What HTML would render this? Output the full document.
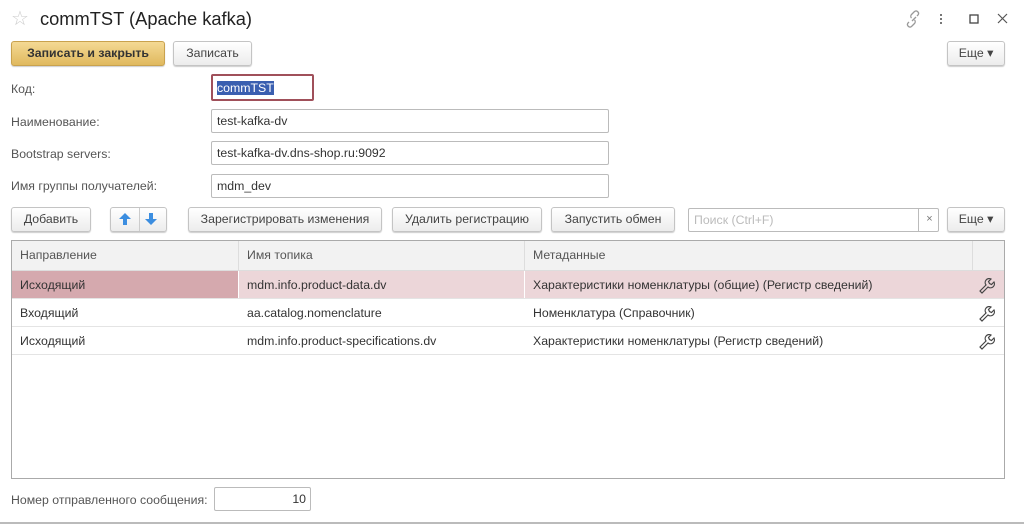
<!DOCTYPE html><html><head><meta charset="utf-8"><style>
body{margin:0;width:1024px;height:525px;background:#fff;font-family:"Liberation Sans",sans-serif;font-size:12.3px;color:#333;position:relative;overflow:hidden}
.a{position:absolute}
.btn{position:absolute;border:1px solid #c4c4c4;border-radius:3px;background:linear-gradient(#fff,#ececec);box-shadow:0 1px 1px rgba(0,0,0,.2);text-align:center;line-height:23px;color:#444;box-sizing:border-box;height:25px}
.inp{position:absolute;border:1px solid #bbb;border-radius:2px;box-sizing:border-box;height:24px;line-height:22px;padding-left:5px;color:#333;background:#fff}
.lbl{position:absolute;color:#555}
.cell{position:absolute;line-height:28px;padding-left:8px;box-sizing:border-box}
.wr{position:absolute;left:978px}
</style></head><body>
<div class="a" style="left:11px;top:6px;font-size:20px;color:#ccc">☆</div>
<div class="a" style="left:40px;top:8px;font-size:18.3px;color:#222">commTST (Apache kafka)</div>
<svg class="a" style="left:905px;top:10px" width="110" height="18" viewBox="0 0 110 18">
<g fill="none" stroke="#999" stroke-width="1.3"><path d="M4 12l-1 1a2.5 2.5 0 0 0 3.5 3.5l3-3a2.5 2.5 0 0 0 0-3.5M12 6l1-1a2.5 2.5 0 0 0-3.5-3.5l-3 3a2.5 2.5 0 0 0 0 3.5"/><path d="M7 11l4-4"/></g>
<g fill="#777"><rect x="35" y="4" width="2" height="2"/><rect x="35" y="8" width="2" height="2"/><rect x="35" y="12" width="2" height="2"/></g>
<rect x="65" y="5" width="8" height="8" fill="none" stroke="#444" stroke-width="1.3"/>
<path d="M93 4l9 9M102 4l-9 9" stroke="#555" stroke-width="1.2"/></svg>
<div class="btn" style="left:11px;top:41px;width:154px;background:linear-gradient(#f4d994,#e0b95e);border-color:#c9a24e;color:#333;font-weight:bold">Записать и закрыть</div>
<div class="btn" style="left:173px;top:41px;width:79px">Записать</div>
<div class="btn" style="left:947px;top:41px;width:58px">Еще ▾</div>
<div class="lbl" style="left:11px;top:82px">Код:</div>
<div class="inp" style="left:211px;top:74px;width:103px;height:27px;border:2px solid #a0505a;line-height:25px;padding-left:4px"><span style="background:#3a5fb0;color:#fff">commTST</span></div>
<div class="lbl" style="left:11px;top:115px">Наименование:</div>
<div class="inp" style="left:211px;top:109px;width:398px">test-kafka-dv</div>
<div class="lbl" style="left:11px;top:147px">Bootstrap servers:</div>
<div class="inp" style="left:211px;top:141px;width:398px">test-kafka-dv.dns-shop.ru:9092</div>
<div class="lbl" style="left:11px;top:179px">Имя группы получателей:</div>
<div class="inp" style="left:211px;top:174px;width:398px">mdm_dev</div>
<div class="btn" style="left:11px;top:207px;width:80px">Добавить</div>
<div class="btn" style="left:110px;top:207px;width:57px"></div>
<div class="a" style="left:139px;top:208px;width:1px;height:23px;background:#ccc"></div>
<svg class="a" style="left:118px;top:212px" width="44" height="14"><path d="M7 1l6 6h-4v6h-4v-6h-4z" fill="#3c8ee0"/><path d="M33 13l6-6h-4v-6h-4v6h-4z" fill="#3c8ee0"/></svg>
<div class="btn" style="left:188px;top:207px;width:194px">Зарегистрировать изменения</div>
<div class="btn" style="left:392px;top:207px;width:150px">Удалить регистрацию</div>
<div class="btn" style="left:551px;top:207px;width:124px">Запустить обмен</div>
<div class="inp" style="left:688px;top:208px;width:251px;color:#bbb">Поиск (Ctrl+F)</div>
<div class="a" style="left:918px;top:208px;width:21px;height:24px;border-left:1px solid #bbb;text-align:center;line-height:22px;color:#777;font-size:11px">×</div>
<div class="btn" style="left:947px;top:207px;width:58px">Еще ▾</div>
<div class="a" style="left:11px;top:240px;width:994px;height:239px;border:1px solid #aaa;box-sizing:border-box"></div>
<div class="a" style="left:12px;top:241px;width:992px;height:29px;background:#f2f2f2;border-bottom:1px solid #ddd"></div>
<div class="a" style="left:238px;top:241px;width:1px;height:29px;background:#ddd"></div>
<div class="a" style="left:524px;top:241px;width:1px;height:29px;background:#ddd"></div>
<div class="a" style="left:972px;top:241px;width:1px;height:57px;background:#ddd"></div>
<div class="cell" style="left:12px;top:241px;color:#555">Направление</div>
<div class="cell" style="left:239px;top:241px;color:#555">Имя топика</div>
<div class="cell" style="left:525px;top:241px;color:#555">Метаданные</div>
<div class="a" style="left:12px;top:271px;width:992px;height:27px;background:#ecd6d9"></div>
<div class="a" style="left:12px;top:271px;width:226px;height:27px;background:#d5a9ae"></div>
<div class="a" style="left:238px;top:271px;width:1px;height:27px;background:#fff"></div>
<div class="a" style="left:524px;top:271px;width:1px;height:27px;background:#fff"></div>
<div class="a" style="left:12px;top:298px;width:992px;height:1px;background:#e4e4e4"></div>
<div class="a" style="left:12px;top:326px;width:992px;height:1px;background:#e4e4e4"></div>
<div class="a" style="left:12px;top:354px;width:992px;height:1px;background:#e4e4e4"></div>
<div class="cell" style="left:12px;top:271px">Исходящий</div>
<div class="cell" style="left:239px;top:271px">mdm.info.product-data.dv</div>
<div class="cell" style="left:525px;top:271px">Характеристики номенклатуры (общие) (Регистр сведений)</div>
<div class="cell" style="left:12px;top:299px">Входящий</div>
<div class="cell" style="left:239px;top:299px">aa.catalog.nomenclature</div>
<div class="cell" style="left:525px;top:299px">Номенклатура (Справочник)</div>
<div class="cell" style="left:12px;top:327px">Исходящий</div>
<div class="cell" style="left:239px;top:327px">mdm.info.product-specifications.dv</div>
<div class="cell" style="left:525px;top:327px">Характеристики номенклатуры (Регистр сведений)</div>
<svg class="wr" style="top:276px" width="18" height="18" viewBox="0 0 18 18"><path d="M2 15l6-6a4 4 0 0 1 5-6l-2.5 2.5 1 2 2 1L16 6a4 4 0 0 1-6 5l-6 6z" fill="none" stroke="#444" stroke-width="1.2"/></svg>
<svg class="wr" style="top:304px" width="18" height="18" viewBox="0 0 18 18"><path d="M2 15l6-6a4 4 0 0 1 5-6l-2.5 2.5 1 2 2 1L16 6a4 4 0 0 1-6 5l-6 6z" fill="none" stroke="#444" stroke-width="1.2"/></svg>
<svg class="wr" style="top:332px" width="18" height="18" viewBox="0 0 18 18"><path d="M2 15l6-6a4 4 0 0 1 5-6l-2.5 2.5 1 2 2 1L16 6a4 4 0 0 1-6 5l-6 6z" fill="none" stroke="#444" stroke-width="1.2"/></svg>
<div class="lbl" style="left:11px;top:493px">Номер отправленного сообщения:</div>
<div class="inp" style="left:214px;top:487px;width:97px;text-align:right;padding-right:4px">10</div>
<div class="a" style="left:0;top:522px;width:1024px;height:2px;background:#bbb"></div>
</body></html>
